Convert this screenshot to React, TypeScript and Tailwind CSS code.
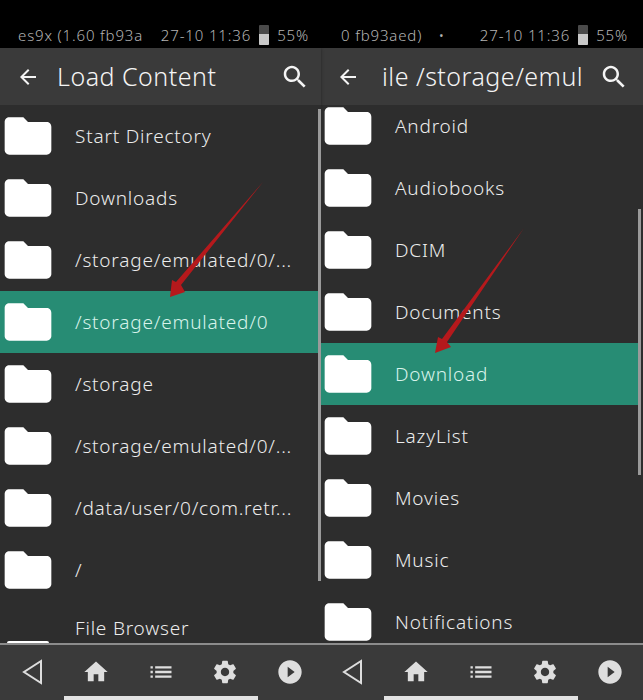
import React from 'react';

const FONT = "font-['Noto_Sans',sans-serif]";

const leftItems = [
  'Start Directory',
  'Downloads',
  '/storage/emulated/0/...',
  '/storage/emulated/0',
  '/storage',
  '/storage/emulated/0/...',
  '/data/user/0/com.retr...',
  '/',
];

const rightItems = [
  'Android',
  'Audiobooks',
  'DCIM',
  'Documents',
  'Download',
  'LazyList',
  'Movies',
  'Music',
  'Notifications',
];

const Icon: React.FC<{ d: string; className: string }> = ({ d, className }) => (
  <svg viewBox="0 0 24 24" fill="currentColor" className={className}>
    <path d={d} />
  </svg>
);

const BACK = 'M20 11H7.83l5.59-5.59L12 4l-8 8 8 8 1.41-1.41L7.83 13H20v-2z';
const SEARCH =
  'M15.5 14h-.79l-.28-.27C15.41 12.59 16 11.11 16 9.5 16 5.91 13.09 3 9.5 3S3 5.91 3 9.5 5.91 16 9.5 16c1.61 0 3.09-.59 4.23-1.57l.27.28v.79l5 4.99L20.49 19l-4.99-5zm-6 0C7.01 14 5 11.99 5 9.5S7.01 5 9.5 5 14 7.01 14 9.5 11.99 14 9.5 14z';
const FOLDER = 'M10 4H4c-1.1 0-2 .9-2 2v12c0 1.1.9 2 2 2h16c1.1 0 2-.9 2-2V8c0-1.1-.9-2-2-2h-8l-2-2z';
const HOME = 'M10 20v-6h4v6h5v-8h3L12 3 2 12h3v8z';
const LIST = 'M3 13h2v-2H3v2zm0 4h2v-2H3v2zm0-8h2V7H3v2zm4 4h14v-2H7v2zm0 4h14v-2H7v2zM7 7v2h14V7H7z';
const GEAR =
  'M19.14 12.94c.04-.3.06-.61.06-.94 0-.32-.02-.64-.07-.94l2.03-1.58c.18-.14.23-.41.12-.61l-1.92-3.32c-.12-.22-.37-.29-.59-.22l-2.39.96c-.5-.38-1.03-.7-1.62-.94l-.36-2.54c-.04-.24-.24-.41-.48-.41h-3.84c-.24 0-.43.17-.47.41l-.36 2.54c-.59.24-1.13.57-1.62.94l-2.39-.96c-.22-.08-.47 0-.59.22L2.74 8.87c-.12.21-.08.47.12.61l2.03 1.58c-.05.3-.09.63-.09.94s.02.64.07.94l-2.03 1.58c-.18.14-.23.41-.12.61l1.92 3.32c.12.22.37.29.59.22l2.39-.96c.5.38 1.03.7 1.62.94l.36 2.54c.05.24.24.41.48.41h3.84c.24 0 .44-.17.47-.41l.36-2.54c.59-.24 1.13-.56 1.62-.94l2.39.96c.22.08.47 0 .59-.22l1.92-3.32c.12-.22.07-.47-.12-.61l-2.01-1.58zM12 15.6c-1.98 0-3.6-1.62-3.6-3.6s1.62-3.6 3.6-3.6 3.6 1.62 3.6 3.6-1.62 3.6-3.6 3.6z';
const PLAY =
  'M12 2C6.48 2 2 6.48 2 12s4.48 10 10 10 10-4.48 10-10S17.52 2 12 2zm-2 14.5v-9l6 4.5-6 4.5z';

const Row: React.FC<{ label: string; selected?: boolean }> = ({ label, selected }) => (
  <div className={`flex h-[62px] shrink-0 items-center gap-[19px] ${selected ? 'bg-[#278c74] text-[#d8f3eb]' : 'text-[#ececec]'}`}>
    <Icon d={FOLDER} className="h-14 w-14 shrink-0 text-white" />
    <span className="whitespace-nowrap text-[19px] font-light tracking-[0.8px]">{label}</span>
  </div>
);

// wide = right window, which runs 3px further than the left one
const StatusBar: React.FC<{ left: string; dot?: boolean; wide?: boolean }> = ({ left, dot, wide }) => (
  <div className={`flex h-12 items-end justify-between bg-black pb-[3px] text-[15px] font-light leading-[20px] tracking-[0.85px] text-[#b4b4b4] ${wide ? 'pl-[21px] pr-[15px]' : 'pl-[18px] pr-[12px]'}`}>
    <span className={`flex justify-between whitespace-pre ${wide ? 'w-[104px]' : 'w-[130px]'}`}>
      {left}
      {dot && <span>•</span>}
    </span>
    <span className="flex items-center whitespace-nowrap">
      27-10 11:36
      <span className="relative mx-2 h-5 w-[10px] rounded-[1px] bg-[#4a4a4a]">
        <span className="absolute bottom-0 left-0 h-[11px] w-full rounded-b-[1px] bg-[#c8c8c8]" />
      </span>
      55%
    </span>
  </div>
);

const Header: React.FC<{ title: string; wide?: boolean }> = ({ title, wide }) => (
  <div className={`flex h-[57px] shrink-0 items-center bg-[#3a3a3a] pl-4 text-[#f4f4f4] shadow-[0_1px_3px_rgba(0,0,0,0.4)] ${wide ? 'pr-[14px]' : 'pr-[11px]'}`}>
    <Icon d={BACK} className="h-6 w-6 shrink-0" />
    <div className={`flex-1 overflow-hidden whitespace-nowrap text-[25px] font-light tracking-[0.5px] ${wide ? 'ml-[22px]' : 'ml-[17px]'}`}>{title}</div>
    <Icon d={SEARCH} className="ml-2 h-[30px] w-[30px] shrink-0" />
  </div>
);

const NavBar: React.FC<{ wide?: boolean }> = ({ wide }) => (
  <div className={`relative flex h-[57px] items-start justify-between border-t-2 border-[#8c8c8c] bg-[#3a3a3a] pl-[21px] pt-[13px] text-[#dedede] ${wide ? 'pr-[19px]' : 'pr-[17px]'}`}>
    <svg viewBox="0 0 24 28" className="h-7 w-6" fill="none" stroke="currentColor" strokeWidth="2">
      <path d="M20 3 3 14l17 11z" />
    </svg>
    <Icon d={HOME} className="h-7 w-7" />
    <Icon d={LIST} className="h-7 w-7" />
    <Icon d={GEAR} className="h-7 w-7" />
    <Icon d={PLAY} className="h-7 w-7" />
    <div className="absolute bottom-0 left-[64px] h-[4px] w-[194px] bg-[#e2e2e2]" />
  </div>
);

export default function App() {
  return (
    <div className={`relative flex h-[700px] w-[643px] overflow-hidden bg-[#2d2d2d] ${FONT}`}>
      {/* Left window */}
      <div className="relative z-10 flex h-full w-[321px] flex-col">
        <StatusBar left="es9x (1.60 fb93a" />
        <Header title="Load Content" />
        <div className="relative flex-1 overflow-hidden bg-[#2d2d2d] pr-[3px]">
          {leftItems.map((item, idx) => (
            <Row key={idx} label={item} selected={idx === 3} />
          ))}
          {/* last row is taller, only the top edge of its icon shows */}
          <div className="pl-[75px] pt-[15px] text-[19px] font-light leading-6 tracking-[0.8px] text-[#ececec]">File Browser</div>
          <div className="ml-[7px] mt-[1px] h-[3px] w-[42px] rounded-t-[2px] bg-white" />
          <div className="absolute right-0 top-1 h-[472px] w-[3px] bg-[#9a9a9a]" />
        </div>
        <NavBar />
      </div>

      {/* Right window */}
      <div className="relative -ml-px flex h-full w-[323px] flex-col">
        <StatusBar left="0 fb93aed)" dot wide />
        <Header title="ile /storage/emul" wide />
        <div className="relative flex-1 overflow-hidden bg-[#2d2d2d] pr-[5px]">
          <div className="-mt-[10px] flex flex-col">
            {rightItems.map((item, idx) => (
              <Row key={idx} label={item} selected={idx === 4} />
            ))}
          </div>
          <div className="absolute right-[2px] top-[104px] h-[266px] w-[3px] bg-[#9a9a9a]" />
        </div>
        <NavBar wide />
      </div>

      {/* Annotation arrows drawn over the shot */}
      <svg viewBox="0 0 130 140" className="absolute left-[150px] top-[175px] z-20 h-[140px] w-[130px]">
        <polygon points="113,7 31,110 35,117 20,122 22,105 26,107" fill="#b5191c" />
      </svg>
      <svg viewBox="0 0 130 140" className="absolute left-[420px] top-[225px] z-20 h-[140px] w-[130px]">
        <polygon points="104,3 27,117 31,122 15,128 18,112 22,114" fill="#b5191c" />
      </svg>
    </div>
  );
}
